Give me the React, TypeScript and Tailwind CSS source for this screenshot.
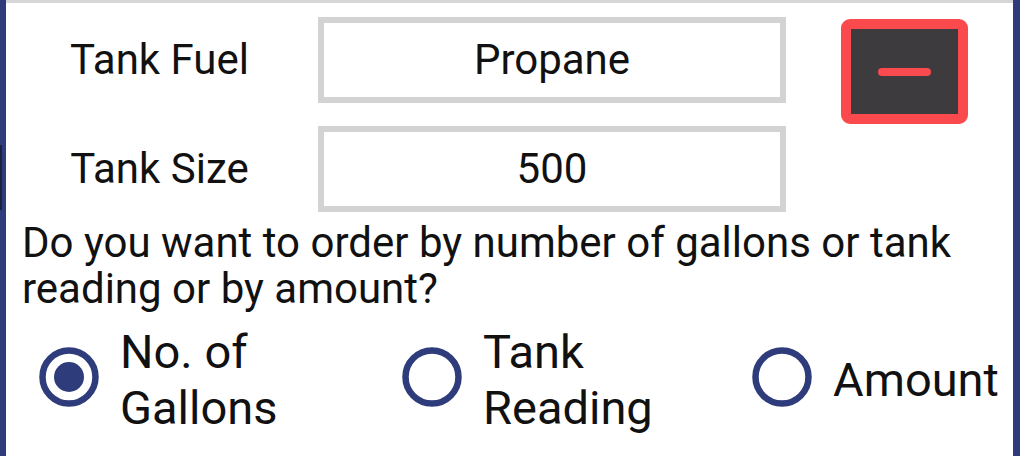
import { useState } from 'react';

const BLUE = '#2e3c7b';

function Radio({ checked }: { checked: boolean }) {
  return (
    <svg width="60" height="60" viewBox="0 0 60 60" className="shrink-0 mb-[6px]">
      <circle cx="30" cy="30" r="26.5" fill="none" stroke={BLUE} strokeWidth="6.5" />
      {checked && <circle cx="30" cy="30" r="15" fill={BLUE} />}
    </svg>
  );
}

function FieldRow({ label, value, className }: { label: string; value: string; className?: string }) {
  return (
    <div className={`flex items-center ${className ?? ''}`}>
      <div className="w-[307px] text-center text-[42px] leading-[48px]">{label}</div>
      <div className="ml-[5px] w-[468px] h-[86px] border-[6px] border-[#d3d3d3] flex items-center justify-center text-[42px] leading-[48px]">
        {value}
      </div>
    </div>
  );
}

export default function App() {
  const [choice, setChoice] = useState('gallons');

  const options = [
    { id: 'gallons', label: ['No. of', 'Gallons'], width: 'w-[363px]' },
    { id: 'reading', label: ['Tank', 'Reading'], width: 'w-[350px]' },
    { id: 'amount', label: ['Amount'], width: 'flex-1' },
  ];

  return (
    <div className="w-[1020px] h-[456px] flex bg-white overflow-hidden text-[#111] font-['Roboto','Noto_Sans',sans-serif]">
      {/* left frame */}
      <div className="w-[6px] shrink-0 bg-[#2e3c7b]">
        <div className="mt-[145px] h-[65px] w-[2px] bg-[#1b2142]" />
      </div>

      <div className="flex-1 flex flex-col">
        <div className="h-[3px] bg-[#d6d6d6]" />

        {/* tank fields + remove button */}
        <div className="flex">
          <div className="flex flex-col">
            <FieldRow label="Tank Fuel" value="Propane" className="mt-[14px]" />
            <FieldRow label="Tank Size" value="500" className="mt-[23px]" />
          </div>
          <button className="ml-[55px] mt-[16px] w-[127px] h-[105px] rounded-[9px] border-[10px] border-[#fb4a4e] bg-[#3d3b3e] flex items-center justify-center">
            <span className="block w-[53px] h-[8px] rounded-full bg-[#fb4a4e]" />
          </button>
        </div>

        {/* question */}
        <p className="mt-[8px] pl-[16px] text-[42px] leading-[46px]">
          Do you want to order by number of gallons or tank reading or by amount?
        </p>

        {/* radio group */}
        <div className="mt-[12px] pl-[33px] flex">
          {options.map(opt => (
            <label
              key={opt.id}
              className={`${opt.width} flex items-center cursor-pointer`}
              onClick={() => setChoice(opt.id)}
            >
              <Radio checked={choice === opt.id} />
              <span className="ml-[21px] text-[47px] leading-[56px]">
                {opt.label.map(line => (
                  <span key={line} className="block">{line}</span>
                ))}
              </span>
            </label>
          ))}
        </div>
      </div>

      {/* right frame */}
      <div className="w-[7px] shrink-0 bg-[#2e3c7b]" />
    </div>
  );
}
